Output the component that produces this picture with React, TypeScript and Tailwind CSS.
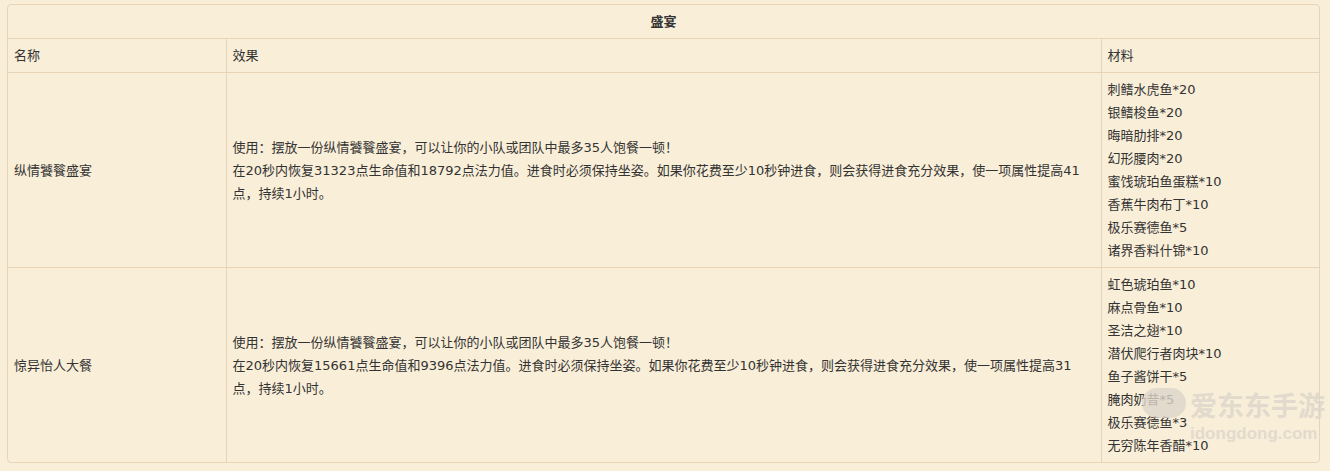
const rows = [
  {
    name: "纵情饕餮盛宴",
    effect: [
      "使用：摆放一份纵情饕餮盛宴，可以让你的小队或团队中最多35人饱餐一顿！",
      "在20秒内恢复31323点生命值和18792点法力值。进食时必须保持坐姿。如果你花费至少10秒钟进食，则会获得进食充分效果，使一项属性提高41点，持续1小时。",
    ],
    materials: [
      "刺鳍水虎鱼*20",
      "银鳍梭鱼*20",
      "晦暗肋排*20",
      "幻形腰肉*20",
      "蜜饯琥珀鱼蛋糕*10",
      "香蕉牛肉布丁*10",
      "极乐赛德鱼*5",
      "诸界香料什锦*10",
    ],
  },
  {
    name: "惊异怡人大餐",
    effect: [
      "使用：摆放一份纵情饕餮盛宴，可以让你的小队或团队中最多35人饱餐一顿！",
      "在20秒内恢复15661点生命值和9396点法力值。进食时必须保持坐姿。如果你花费至少10秒钟进食，则会获得进食充分效果，使一项属性提高31点，持续1小时。",
    ],
    materials: [
      "虹色琥珀鱼*10",
      "麻点骨鱼*10",
      "圣洁之翅*10",
      "潜伏爬行者肉块*10",
      "鱼子酱饼干*5",
      "腌肉奶昔*5",
      "极乐赛德鱼*3",
      "无穷陈年香醋*10",
    ],
  },
];

const font = "font-['DejaVu_Sans','Noto_Sans_CJK_SC',sans-serif]";

export default function App() {
  return (
    <div className={`relative min-h-[471px] w-[1330px] overflow-hidden bg-[#f9eed8] pt-[4px] pl-[7px] text-[13px] leading-[23px] text-[#333] ${font}`}>
      <div className="w-[1313px] overflow-hidden rounded-[4px] border border-[#e8d4b6]">
        <table className="w-full table-fixed border-collapse">
          <colgroup>
            <col className="w-[218px]" />
            <col className="w-[875px]" />
            <col />
          </colgroup>
          <thead>
            <tr>
              <th colSpan={3} className="px-[6px] py-[5px] text-center font-bold">
                盛宴
              </th>
            </tr>
            <tr className="border-t border-[#e8d4b6]">
              <td className="px-[6px] py-[5px]">名称</td>
              <td className="border-l border-[#e8d4b6] px-[6px] py-[5px]">效果</td>
              <td className="border-l border-[#e8d4b6] px-[6px] py-[5px]">材料</td>
            </tr>
          </thead>
          <tbody>
            {rows.map((r) => (
              <tr key={r.name} className="border-t border-[#e8d4b6]">
                <td className="px-[6px] py-[5px] align-middle">{r.name}</td>
                <td className="border-l border-[#e8d4b6] px-[6px] py-[5px] align-middle">
                  {r.effect.map((line, i) => (
                    <p key={i}>{line}</p>
                  ))}
                </td>
                <td className="border-l border-[#e8d4b6] px-[6px] py-[5px] align-middle">
                  {r.materials.map((m) => (
                    <p key={m}>{m}</p>
                  ))}
                </td>
              </tr>
            ))}
          </tbody>
        </table>
      </div>

      {/* watermark */}
      <div className="pointer-events-none absolute left-[1142px] top-[388px] flex items-start gap-[4px] text-[#dcd5ca]/80">
        <svg width="44" height="32" viewBox="0 0 44 32">
          <rect x="0" y="0" width="44" height="30" rx="15" fill="currentColor" />
        </svg>
        <div className="flex w-[136px] flex-col items-start">
          <span className="text-[27px] leading-[34px] font-bold font-['Noto_Sans_CJK_SC',sans-serif]">爱东东手游</span>
          <span className="text-[17px] leading-[24px] font-bold font-['Liberation_Sans',sans-serif]">idongdong.com</span>
        </div>
      </div>
    </div>
  );
}
